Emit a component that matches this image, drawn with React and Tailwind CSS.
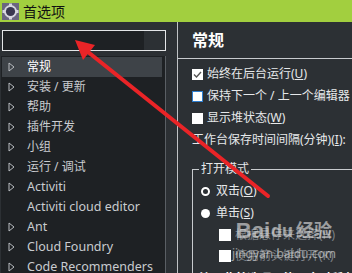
import React from "react";

const FONT = { fontFamily: '"Noto Sans", "Noto Sans CJK SC", sans-serif' };

function Tri() {
  return (
    <svg width="7" height="10" viewBox="0 0 7 10" className="shrink-0">
      <path d="M1 1 L6 5 L1 9 Z" fill="none" stroke="#b8bcc0" strokeWidth="1" />
    </svg>
  );
}

function Row({ label, selected, noArrow, latin }) {
  return (
    <div
      className={`flex items-center h-[20px] shrink-0 pl-[6px] ${selected ? "bg-[#3e4348] text-white" : "text-[#c9ccd0]"}`}
    >
      <div className="w-[7px] flex items-center">{!noArrow && <Tri />}</div>
      <span className={`ml-[12px] whitespace-nowrap ${latin ? "text-[12.5px]" : "text-[12px]"}`}>{label}</span>
    </div>
  );
}

function Check({ checked, focused, children }) {
  return (
    <div className="flex items-center h-[22px] shrink-0">
      <div
        className={`w-[11px] h-[11px] bg-white flex items-center justify-center ${focused ? "border border-[#2f7fd0]" : ""}`}
      >
        {checked && (
          <svg width="9" height="9" viewBox="0 0 9 9">
            <path d="M1 4.5 L3.5 7 L8 2" fill="none" stroke="#555" strokeWidth="1.4" />
          </svg>
        )}
      </div>
      <span className="ml-[4px] text-[12px] whitespace-nowrap text-[#e6e8ea]">{children}</span>
    </div>
  );
}

export default function App() {
  const rows = [
    ["常规", false, false],
    ["安装 / 更新", false, false],
    ["帮助", false, false],
    ["插件开发", false, false],
    ["小组", false, false],
    ["运行 / 调试", false, false],
    ["Activiti", false, true],
    ["Activiti cloud editor", true, true],
    ["Ant", false, true],
    ["Cloud Foundry", false, true],
    ["Code Recommenders", false, true],
  ];
  return (
    <div className="relative w-[352px] h-[273px] overflow-hidden bg-[#2c3034]" style={FONT}>
      {/* title bar */}
      <div className="h-[22px] bg-[#a2cf3f] flex items-center pl-[2px]">
        <svg width="17" height="17" viewBox="0 0 17 17">
          <rect x="0" y="0" width="17" height="17" fill="#6b6680" />
          <circle cx="8.5" cy="8.5" r="6.5" fill="#d8d8e0" />
          <g fill="#d8d8e0">
            <rect x="7" y="0.5" width="3" height="3" />
            <rect x="7" y="13.5" width="3" height="3" />
            <rect x="0.5" y="7" width="3" height="3" />
            <rect x="13.5" y="7" width="3" height="3" />
          </g>
          <circle cx="8.5" cy="8.5" r="4.6" fill="#3b3850" />
        </svg>
        <span className="ml-[4px] text-[14px] text-[#111]">首选项</span>
      </div>
      <div className="flex h-[251px] overflow-hidden">
        {/* left */}
        <div className="w-[177px] shrink-0 flex flex-col min-h-0">
          <div className="shrink-0 mt-[8px] ml-[2px] w-[164px] h-[21px] border border-[#e4e6e8] bg-[#1e2124] flex justify-end">
            <div className="w-[21px] h-full bg-[#2c3034]" />
          </div>
          <div className="mt-[5px] ml-[1px] w-[165px] flex-1 min-h-0 overflow-hidden bg-[#1e2124] border-r border-[#5a5f64] pt-[1px]">
            <div className="w-[160px] ml-[1px] flex flex-col">
              {rows.map(([l, noArrow, latin], i) => (
                <Row key={i} label={l} selected={i === 0} noArrow={noArrow} latin={latin} />
              ))}
            </div>
          </div>
        </div>
        <div className="w-[1px] shrink-0 bg-[#bfc2c5]" />
        {/* right */}
        <div className="flex-1 flex flex-col min-h-0 overflow-hidden">
          <div className="h-[36px] shrink-0 flex items-center pl-[14px]">
            <span className="text-[16px] font-bold text-white">常规</span>
          </div>
          <div className="h-[1px] shrink-0 bg-[#c8cbce]" />
          <div className="pl-[14px] pt-[4px] flex flex-col shrink-0">
            <Check checked>始终在后台运行(<u>U</u>)</Check>
            <Check focused>保持下一个 / 上一个编辑器</Check>
            <Check>显示堆状态(<u>W</u>)</Check>
            <div className="h-[22px] shrink-0 flex items-center text-[12px] text-[#e6e8ea] whitespace-nowrap">工作台保存时间间隔(分钟)(<u>I</u>):</div>
            <div className="relative shrink-0 mt-[18px] border-l border-t border-[#c8cbce]">
              <span className="absolute -top-[9px] left-[6px] px-[2px] bg-[#2c3034] text-[12px] leading-[16px] text-[#e6e8ea]">打开模式</span>
              <div className="pt-[10px] pl-[8px] flex flex-col">
                <div className="flex items-center h-[22px]">
                  <div className="w-[9px] h-[9px] rounded-full border-[2px] border-white" />
                  <span className="ml-[6px] text-[12px] text-[#e6e8ea]">双击(<u>O</u>)</span>
                </div>
                <div className="flex items-center h-[22px]">
                  <div className="w-[9px] h-[9px] rounded-full bg-white" />
                  <span className="ml-[6px] text-[12px] text-[#e6e8ea]">单击(<u>S</u>)</span>
                </div>
                <div className="pl-[18px]">
                  <div className="flex items-center h-[21px]">
                    <div className="w-[12px] h-[12px] bg-white" />
                    <span className="ml-[4px] text-[12px] text-[#7d8186] whitespace-nowrap">根据悬停来选择(H)</span>
                  </div>
                  <div className="flex items-center h-[21px]">
                    <div className="w-[12px] h-[12px] bg-white" />
                    <span className="ml-[4px] text-[12px] text-[#7d8186] whitespace-nowrap">使用箭头键打开(K)</span>
                  </div>
                </div>
                <div className="mt-[4px] -ml-[2px] text-[12px] font-bold text-white whitespace-nowrap">注：此首选项可能不会对所有视图生效</div>
              </div>
            </div>
          </div>
        </div>
      </div>
      {/* watermark */}
      <div className="absolute left-[232px] top-[220px] pointer-events-none flex flex-col items-center opacity-60">
        <div className="flex items-center text-[22px] font-bold text-[#e8e8e8] leading-none" style={{ fontFamily: '"Liberation Sans", "Noto Sans CJK SC", sans-serif' }}>
          <span>Bai</span>
          <span className="text-[18px] mx-[1px]">du</span>
          <span className="text-[18px] ml-[2px]">经验</span>
        </div>
        <div className="text-[12px] text-[#e8e8e8] leading-none mt-[6px]">jingyan.baidu.com</div>
      </div>
      {/* red arrow */}
      <svg className="absolute left-0 top-0 pointer-events-none" width="352" height="273" viewBox="0 0 352 273">
        <line x1="268" y1="196" x2="88" y2="52" stroke="#ea2427" strokeWidth="4" strokeLinecap="round" />
        <polygon points="75,40 95,45 83,60" fill="#ea2427" />
      </svg>
    </div>
  );
}
